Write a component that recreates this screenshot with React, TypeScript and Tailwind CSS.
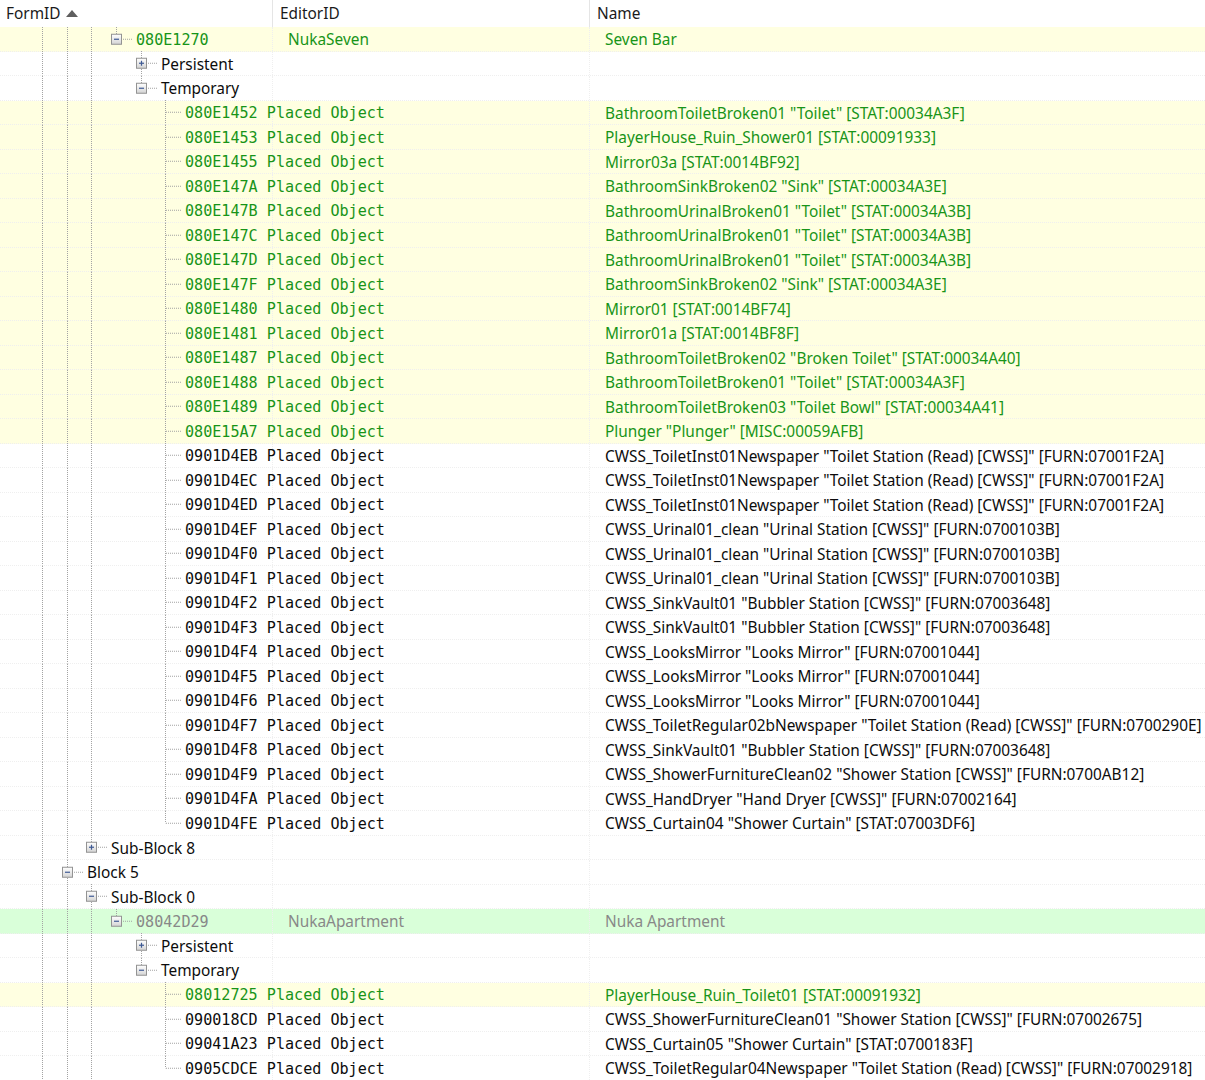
import React from "react";

type Tone = "yellow" | "green" | "white";

type Row = {
    level: number;
    kind: "leaf" | "open" | "closed";
    guides: number[];
    last: boolean;
    formId?: string;
    label?: string;
    editorId?: string;
    name?: string;
    tone: Tone;
};

// x position of each tree level (center of the expander / guide line)
const LX = [18, 42, 67, 91, 116, 141, 165];
const ROW_H = 24.5;

const G = [1, 2, 3];

const leaf = (formId: string, name: string, tone: Tone, last = false): Row => ({
    level: 6, kind: "leaf", guides: G, last, formId, name, tone,
});

const rows: Row[] = [
    { level: 4, kind: "open", guides: G, last: true, formId: "080E1270", editorId: "NukaSeven", name: "Seven Bar", tone: "yellow" },
    { level: 5, kind: "closed", guides: G, last: false, label: "Persistent", tone: "white" },
    { level: 5, kind: "open", guides: G, last: true, label: "Temporary", tone: "white" },
    leaf("080E1452", 'BathroomToiletBroken01 "Toilet" [STAT:00034A3F]', "yellow"),
    leaf("080E1453", "PlayerHouse_Ruin_Shower01 [STAT:00091933]", "yellow"),
    leaf("080E1455", "Mirror03a [STAT:0014BF92]", "yellow"),
    leaf("080E147A", 'BathroomSinkBroken02 "Sink" [STAT:00034A3E]', "yellow"),
    leaf("080E147B", 'BathroomUrinalBroken01 "Toilet" [STAT:00034A3B]', "yellow"),
    leaf("080E147C", 'BathroomUrinalBroken01 "Toilet" [STAT:00034A3B]', "yellow"),
    leaf("080E147D", 'BathroomUrinalBroken01 "Toilet" [STAT:00034A3B]', "yellow"),
    leaf("080E147F", 'BathroomSinkBroken02 "Sink" [STAT:00034A3E]', "yellow"),
    leaf("080E1480", "Mirror01 [STAT:0014BF74]", "yellow"),
    leaf("080E1481", "Mirror01a [STAT:0014BF8F]", "yellow"),
    leaf("080E1487", 'BathroomToiletBroken02 "Broken Toilet" [STAT:00034A40]', "yellow"),
    leaf("080E1488", 'BathroomToiletBroken01 "Toilet" [STAT:00034A3F]', "yellow"),
    leaf("080E1489", 'BathroomToiletBroken03 "Toilet Bowl" [STAT:00034A41]', "yellow"),
    leaf("080E15A7", 'Plunger "Plunger" [MISC:00059AFB]', "yellow"),
    leaf("0901D4EB", 'CWSS_ToiletInst01Newspaper "Toilet Station (Read) [CWSS]" [FURN:07001F2A]', "white"),
    leaf("0901D4EC", 'CWSS_ToiletInst01Newspaper "Toilet Station (Read) [CWSS]" [FURN:07001F2A]', "white"),
    leaf("0901D4ED", 'CWSS_ToiletInst01Newspaper "Toilet Station (Read) [CWSS]" [FURN:07001F2A]', "white"),
    leaf("0901D4EF", 'CWSS_Urinal01_clean "Urinal Station [CWSS]" [FURN:0700103B]', "white"),
    leaf("0901D4F0", 'CWSS_Urinal01_clean "Urinal Station [CWSS]" [FURN:0700103B]', "white"),
    leaf("0901D4F1", 'CWSS_Urinal01_clean "Urinal Station [CWSS]" [FURN:0700103B]', "white"),
    leaf("0901D4F2", 'CWSS_SinkVault01 "Bubbler Station [CWSS]" [FURN:07003648]', "white"),
    leaf("0901D4F3", 'CWSS_SinkVault01 "Bubbler Station [CWSS]" [FURN:07003648]', "white"),
    leaf("0901D4F4", 'CWSS_LooksMirror "Looks Mirror" [FURN:07001044]', "white"),
    leaf("0901D4F5", 'CWSS_LooksMirror "Looks Mirror" [FURN:07001044]', "white"),
    leaf("0901D4F6", 'CWSS_LooksMirror "Looks Mirror" [FURN:07001044]', "white"),
    leaf("0901D4F7", 'CWSS_ToiletRegular02bNewspaper "Toilet Station (Read) [CWSS]" [FURN:0700290E]', "white"),
    leaf("0901D4F8", 'CWSS_SinkVault01 "Bubbler Station [CWSS]" [FURN:07003648]', "white"),
    leaf("0901D4F9", 'CWSS_ShowerFurnitureClean02 "Shower Station [CWSS]" [FURN:0700AB12]', "white"),
    leaf("0901D4FA", 'CWSS_HandDryer "Hand Dryer [CWSS]" [FURN:07002164]', "white"),
    leaf("0901D4FE", 'CWSS_Curtain04 "Shower Curtain" [STAT:07003DF6]', "white", true),
    { level: 3, kind: "closed", guides: [1, 2], last: true, label: "Sub-Block 8", tone: "white" },
    { level: 2, kind: "open", guides: [1], last: false, label: "Block 5", tone: "white" },
    { level: 3, kind: "open", guides: [1, 2], last: false, label: "Sub-Block 0", tone: "white" },
    { level: 4, kind: "open", guides: G, last: true, formId: "08042D29", editorId: "NukaApartment", name: "Nuka Apartment", tone: "green" },
    { level: 5, kind: "closed", guides: G, last: false, label: "Persistent", tone: "white" },
    { level: 5, kind: "open", guides: G, last: true, label: "Temporary", tone: "white" },
    leaf("08012725", "PlayerHouse_Ruin_Toilet01 [STAT:00091932]", "yellow"),
    leaf("090018CD", 'CWSS_ShowerFurnitureClean01 "Shower Station [CWSS]" [FURN:07002675]', "white"),
    leaf("09041A23", 'CWSS_Curtain05 "Shower Curtain" [STAT:0700183F]', "white"),
    leaf("0905CDCE", 'CWSS_ToiletRegular04Newspaper "Toilet Station (Read) [CWSS]" [FURN:07002918]', "white", true),
];

const bgFor: Record<Tone, string> = {
    yellow: "bg-[#ffffe1]",
    green: "bg-[#d9ffd9]",
    white: "bg-white",
};

const textFor: Record<Tone, string> = {
    yellow: "text-[#189418]",
    green: "text-[#888888]",
    white: "text-[#0c0c0c]",
};

const mono = "font-['DejaVu_Sans_Mono',monospace] text-[15.1px]";

const TreeGuides = ({ row }: { row: Row }) => {
    const x = LX[row.level];
    const width = x + 20;
    const mid = ROW_H / 2;
    const dash = "1 1";
    const stroke = "#a3a3a3";
    return (
        <svg width={width} height={ROW_H} className="shrink-0 block" viewBox={`0 0 ${width} ${ROW_H}`}>
            <defs>
                <linearGradient id="exp" x1="0" y1="0" x2="0" y2="1">
                    <stop offset="0" stopColor="#ffffff" />
                    <stop offset="1" stopColor="#d4d4d4" />
                </linearGradient>
            </defs>
            {row.guides.map((g) => (
                <line key={g} x1={LX[g] + 0.5} x2={LX[g] + 0.5} y1={0} y2={ROW_H} stroke={stroke} strokeDasharray={dash} />
            ))}
            <line x1={x + 0.5} x2={x + 0.5} y1={0} y2={row.last ? mid : ROW_H} stroke={stroke} strokeDasharray={dash} />
            <line x1={x + 1} x2={x + 17} y1={mid} y2={mid} stroke={stroke} strokeDasharray={dash} />
            {row.kind !== "leaf" && (
                <g>
                    <rect x={x - 4.5} y={mid - 5} width={10} height={10} fill="url(#exp)" stroke="#939393" />
                    <line x1={x - 2} x2={x + 3} y1={mid} y2={mid} stroke="#3f5a94" strokeWidth={1.2} />
                    {row.kind === "closed" && (
                        <line x1={x + 0.5} x2={x + 0.5} y1={mid - 2.5} y2={mid + 2.5} stroke="#3f5a94" strokeWidth={1.2} />
                    )}
                </g>
            )}
        </svg>
    );
};

const TreeRow = ({ row }: { row: Row }) => {
    const tone = textFor[row.tone];
    return (
        <div className={`flex h-[24.5px] border-b border-dotted border-[#efefef] ${bgFor[row.tone]}`}>
            <div className="w-[273px] shrink-0 flex items-center whitespace-nowrap border-r border-dotted border-[#efefef]">
                <TreeGuides row={row} />
                {row.label && <span className="text-[#0c0c0c] pt-[2px]">{row.label}</span>}
                {row.formId && (
                    <span className={`${mono} ${tone} relative z-10 pt-[3px]`}>
                        {row.formId}
                        {row.kind === "leaf" && " Placed Object"}
                    </span>
                )}
            </div>
            <div className={`w-[317px] shrink-0 flex items-center pl-[15px] pt-[2px] border-r border-dotted border-[#efefef] ${tone}`}>
                {row.editorId}
            </div>
            <div className={`flex-1 flex items-center pl-[15px] pt-[2px] whitespace-nowrap overflow-hidden ${tone}`}>
                {row.name}
            </div>
        </div>
    );
};

export default function App() {
    return (
        <div className="w-[1205px] h-[1080px] overflow-hidden bg-white font-['Noto_Sans',sans-serif] text-[15.4px] leading-none">
            <div className="flex h-[27px] bg-white text-[#1a1a1a]">
                <div className="w-[273px] shrink-0 flex items-center pl-[6px] border-r border-[#e5e5e5]">
                    <span>FormID</span>
                    <svg width="12" height="7" viewBox="0 0 12 7" className="ml-[5px]">
                        <path d="M0 7 L6 0 L12 7 Z" fill="#5f5f5f" />
                    </svg>
                </div>
                <div className="w-[317px] shrink-0 flex items-center pl-[7px] border-r border-[#e5e5e5]">EditorID</div>
                <div className="flex-1 flex items-center pl-[7px]">Name</div>
            </div>
            {rows.map((r, i) => (
                <TreeRow key={i} row={r} />
            ))}
        </div>
    );
}
